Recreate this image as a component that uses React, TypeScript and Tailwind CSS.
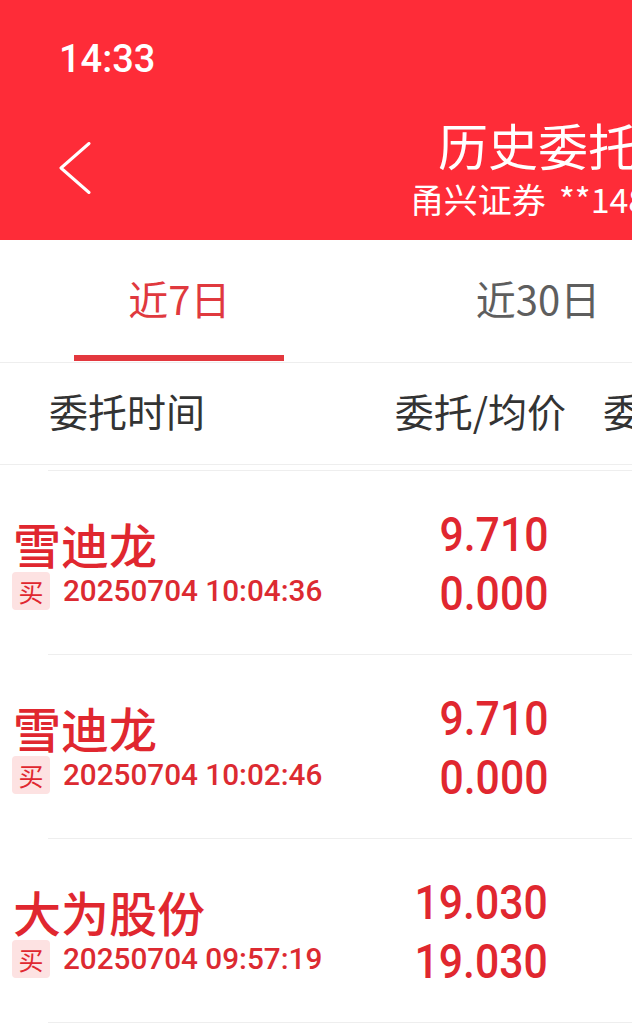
import React from "react";

const rows = [
  { name: "雪迪龙", date: "20250704 10:04:36", p1: "9.710", p2: "0.000", qty: "100" },
  { name: "雪迪龙", date: "20250704 10:02:46", p1: "9.710", p2: "0.000", qty: "100" },
  { name: "大为股份", date: "20250704 09:57:19", p1: "19.030", p2: "19.030", qty: "100" },
];

function Row({ r }: { r: (typeof rows)[number] }) {
  return (
    <div className="h-[183px] flex items-start">
      <div className="w-[360px] flex flex-col pt-[50px]">
        <div className="pl-[13px] text-[48px] leading-[44px] font-medium text-[#e0272f] font-['Noto_Sans_CJK_SC',sans-serif]">
          {r.name}
        </div>
        <div className="mt-[7px] pl-[12px] flex items-center gap-[13px]">
          <div className="w-[38px] h-[38px] rounded-[4px] bg-[#fde2e2] flex items-center justify-center text-[25px] leading-[25px] text-[#e0272f] font-['Noto_Sans_CJK_SC',sans-serif]">
            买
          </div>
          <div className="text-[29.7px] leading-[30px] font-medium text-[#dc2a31] font-['Roboto',sans-serif]">
            {r.date}
          </div>
        </div>
      </div>
      <div className="w-[188px] pt-[34px] flex flex-col items-end font-['Roboto',sans-serif] font-medium text-[48px] text-[#e0272f]">
        <div className="h-[59px] leading-[59px] origin-right scale-x-[0.89]">{r.p1}</div>
        <div className="h-[59px] leading-[59px] origin-right scale-x-[0.89]">{r.p2}</div>
      </div>
      <div className="pl-[100px] pt-[34px] font-['Roboto',sans-serif] font-medium text-[48px] leading-[59px] text-[#e0272f]">
        {r.qty}
      </div>
    </div>
  );
}

export default function App() {
  return (
    <div className="w-[632px] h-[1024px] overflow-hidden bg-white">
      <div className="w-[1076px]">
        <header className="h-[240px] bg-[#fe2c38] text-white">
          <div className="h-[100px] pt-[40px] pl-[59px] font-['Roboto',sans-serif] text-[38px] leading-[38px] font-medium">
            14:33
          </div>
          <div className="h-[140px] grid grid-cols-[1fr_auto_1fr]">
            <div className="pl-[58px] pt-[42px]">
              <svg width="34" height="52" viewBox="0 0 34 52" fill="none">
                <polyline
                  points="31,1.5 3,26 31,50.5"
                  stroke="white"
                  strokeWidth="3"
                  strokeLinecap="round"
                  strokeLinejoin="round"
                />
              </svg>
            </div>
            <div className="flex flex-col items-center pt-[19px] gap-[13px] font-['Noto_Sans_CJK_SC',sans-serif]">
              <div className="text-[50px] leading-[50px]">历史委托</div>
              <div className="flex items-center text-[34px] leading-[34px]">
                <span>甬兴证券</span>
                <span className="ml-[13px]">**1488</span>
              </div>
            </div>
            <div />
          </div>
        </header>

        <div className="h-[123px] border-b border-[#eeeeee] grid grid-cols-3 font-['Noto_Sans_CJK_SC',sans-serif] text-[40px] leading-[40px]">
          <div className="flex flex-col items-center">
            <div className="flex-1 flex items-center text-[#e0393e]">近7日</div>
            <div className="h-[6px] w-[210px] mb-[1px] bg-[#e3383e]" />
          </div>
          <div className="flex flex-col items-center">
            <div className="flex-1 flex items-center text-[#5e5e5e]">近30日</div>
            <div className="h-[6px] mb-[1px]" />
          </div>
          <div className="flex flex-col items-center">
            <div className="flex-1 flex items-center text-[#5e5e5e]">自定义</div>
            <div className="h-[6px] mb-[1px]" />
          </div>
        </div>

        <div className="h-[102px] pb-[6px] border-b border-[#eeeeee] flex items-center font-['Noto_Sans_CJK_SC',sans-serif] text-[39px] leading-[39px] text-[#333333]">
          <div className="w-[360px] pl-[49px]">委托时间</div>
          <div className="w-[206px] text-right">委托/均价</div>
          <div className="pl-[37px]">委托/成交</div>
        </div>

        <div className="h-[5px]" />
        <div className="ml-[48px] h-px bg-[#eeeeee]" />
        {rows.map((r, i) => (
          <div key={i}>
            <Row r={r} />
            <div className="ml-[48px] h-px bg-[#eeeeee]" />
          </div>
        ))}
      </div>
    </div>
  );
}
